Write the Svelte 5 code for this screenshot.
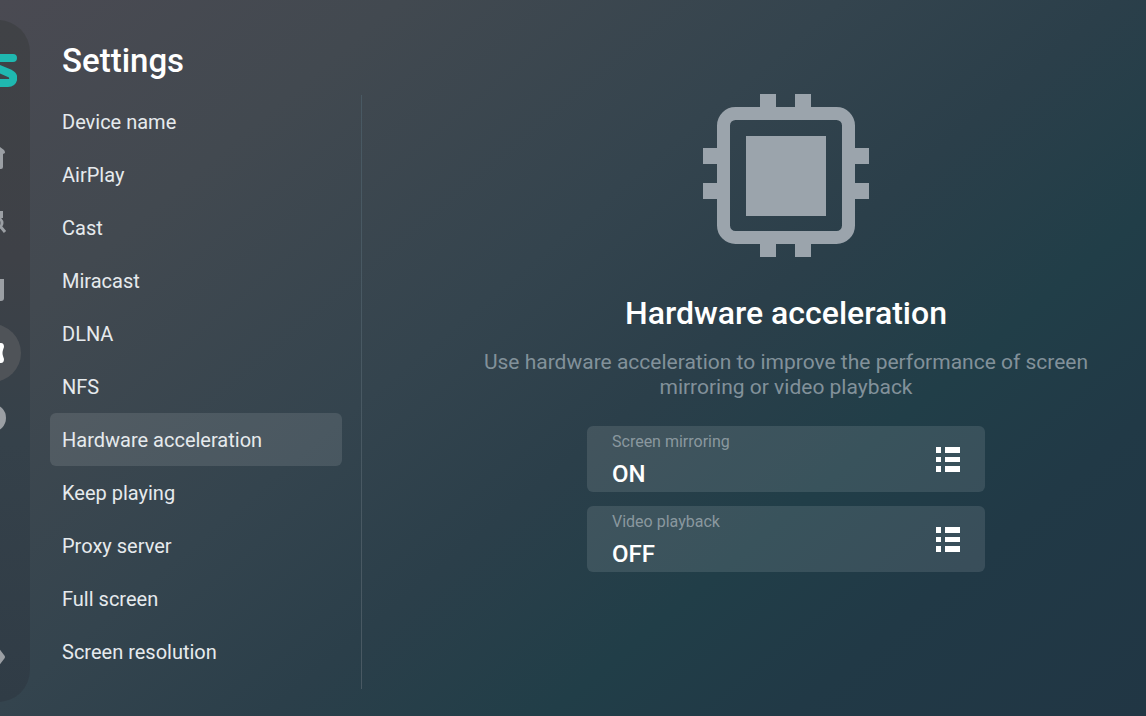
<script lang="ts">
	const items: string[] = [
		'Device name',
		'AirPlay',
		'Cast',
		'Miracast',
		'DLNA',
		'NFS',
		'Hardware acceleration',
		'Keep playing',
		'Proxy server',
		'Full screen',
		'Screen resolution'
	];

	let selected = $state('Hardware acceleration');

	let options = $state([
		{ label: 'Screen mirroring', on: true },
		{ label: 'Video playback', on: false }
	]);
</script>

<div class="app">
	<nav class="rail" aria-label="Main">
		<svg class="logo" viewBox="0 0 50 34" width="50" height="34">
			<path d="M46 4H12C5 4 5 10 12 11L30 14 43 19.500C48 22 47 29 41 29H4" />
		</svg>
		<button aria-label="Home">
			<svg viewBox="0 0 28 28" width="28" height="28">
				<path d="M14-3 26 6q1 1 1 3l-2 1v13a2 2 0 0 1-2 2h-6v-9h-6v9H5a2 2 0 0 1-2-2V10L1 9q0-2 1-3z" />
			</svg>
		</button>
		<button aria-label="Search">
			<svg viewBox="0 0 28 28" width="28" height="28">
				<path d="M2 2h23v7h-3L20 7H5v14h9v3H2z" />
				<path class="line" d="m22 17 5 6M24 14a5 5 0 1 1-10 0 5 5 0 0 1 10 0z" />
			</svg>
		</button>
		<button aria-label="Library">
			<svg viewBox="0 0 28 28" width="28" height="28">
				<path d="M2 5h24v19a3 3 0 0 1-3 3H5a3 3 0 0 1-3-3z" />
			</svg>
		</button>
		<button class="active" aria-label="Settings">
			<svg viewBox="0 0 28 28" width="28" height="28">
				<path d="M10 1h8l1 3h4q3 0 3 4l-1 3q-1 3 0 6l1 3q0 4-3 4h-4l-1 3h-8l-1-3H5q-3 0-3-4l1-3q1-3 0-6L2 8q0-4 3-4h4z" />
			</svg>
		</button>
		<button aria-label="Help">
			<svg viewBox="0 0 28 28" width="28" height="28">
				<circle cx="14" cy="14" r="14" />
			</svg>
		</button>
		<button class="exit" aria-label="Exit">
			<svg viewBox="0 0 28 28" width="28" height="28">
				<path d="M2 11h14V4q0-3 3-1l7 9q2 2 0 4l-7 9q-3 2-3-1v-7H2z" />
			</svg>
		</button>
	</nav>

	<section class="menu">
		<h1>Settings</h1>
		<ul>
			{#each items as item}
				<li>
					<button class:selected={item === selected} onclick={() => (selected = item)}>{item}</button>
				</li>
			{/each}
		</ul>
	</section>

	<main>
		<svg class="chip" viewBox="0 0 166 163" width="166" height="163">
			<path d="M57 0h16v14H57zM92 0h16v14H92zM57 149h16v14H57zM92 149h16v14H92zM0 54h16v16H0zM0 89h16v16H0zM150 54h16v16h-16zM150 89h16v16h-16zM43 42h80v80H43z" />
			<rect x="20.500" y="19.500" width="125" height="124" rx="12" />
		</svg>
		<h2>Hardware acceleration</h2>
		<p>Use hardware acceleration to improve the performance of screen mirroring or video playback</p>
		<div class="options">
			{#each options as option}
				<button onclick={() => (option.on = !option.on)}>
					<span class="text">
						<span class="label">{option.label}</span>
						<span class="value">{option.on ? 'ON' : 'OFF'}</span>
					</span>
					<svg viewBox="0 0 24 25" width="24" height="25">
						<path d="M0 0h5v6H0zM9 0h15v6H9zM0 10h5v5H0zM9 10h15v5H9zM0 19h5v6H0zM9 19h15v6H9z" />
					</svg>
				</button>
			{/each}
		</div>
	</main>
</div>

<style>
	:global(body) {
		margin: 0;
		background: #213644;
	}

	.app {
		display: flex;
		box-sizing: border-box;
		min-height: 100vh;
		overflow: hidden;
		font-family: Roboto, 'Liberation Sans', sans-serif;
		color: #fff;
		background: linear-gradient(140deg, #4a4a52 0%, #424950 20%, #34444e 42%, #2b3f4a 56%, #213e48 70%, #213946 82%, #213644 100%);
	}

	button {
		border: 0;
		background: none;
		font: inherit;
		color: inherit;
		cursor: pointer;
	}

	/* the rail slides partly off the left side of the screen */
	.rail {
		display: flex;
		flex-direction: column;
		align-items: center;
		flex: none;
		gap: 7px;
		box-sizing: border-box;
		width: 76px;
		margin: 20px 0 14px -46px;
		padding: 34px 0 16px;
		border-radius: 32px;
		background: linear-gradient(#404246, #3e4147 35%, #35414a 62%, #303c46);
	}

	.logo {
		margin-bottom: 34px;
		fill: none;
		stroke: #1fb8b0;
		stroke-width: 8;
		stroke-linecap: round;
		stroke-linejoin: round;
	}

	.rail button {
		display: flex;
		align-items: center;
		justify-content: center;
		width: 58px;
		height: 58px;
		padding: 0;
		border-radius: 50%;
		fill: #9b9fa4;
	}

	.rail button svg {
		overflow: visible;
	}

	.rail .active {
		background: #4f5358;
		fill: #fff;
	}

	.rail .exit {
		margin-top: auto;
	}

	.line {
		fill: none;
		stroke: #9b9fa4;
		stroke-width: 3;
	}

	.menu {
		display: flex;
		flex-direction: column;
		flex: none;
		width: 332px;
		padding-bottom: 27px;
	}

	h1 {
		margin: 0;
		padding: 41px 0 14px 32px;
		font-size: 33px;
		line-height: 40px;
		font-weight: 500;
	}

	ul {
		flex: 1;
		margin: 0;
		padding: 0 19px 10px 20px;
		list-style: none;
		border-right: 1px solid #495963;
	}

	li button {
		display: block;
		width: 100%;
		height: 53px;
		padding: 0 12px;
		border-radius: 6px;
		font-size: 20px;
		text-align: left;
		color: #e6eaed;
	}

	li .selected {
		background: rgba(255, 255, 255, 0.11);
	}

	main {
		display: flex;
		flex-direction: column;
		align-items: center;
		flex: 1;
		padding: 94px 32px 40px 96px;
	}

	.chip {
		fill: #9ba4ac;
	}

	.chip rect {
		fill: none;
		stroke: #9ba4ac;
		stroke-width: 13;
	}

	h2 {
		margin: 36px 0 17px;
		font-size: 32px;
		line-height: 40px;
		font-weight: 500;
	}

	p {
		max-width: 640px;
		margin: 0 0 26px;
		font-size: 21px;
		line-height: 25px;
		text-align: center;
		color: #82919a;
	}

	.options {
		display: flex;
		flex-direction: column;
		gap: 14px;
		width: 100%;
		max-width: 398px;
	}

	.options button {
		display: flex;
		align-items: center;
		justify-content: space-between;
		height: 66px;
		padding: 0 25px;
		border-radius: 6px;
		text-align: left;
		background: rgba(255, 255, 255, 0.11);
		fill: #fff;
	}

	.text {
		padding-top: 2px;
	}

	.label,
	.value {
		display: block;
	}

	.label {
		font-size: 16px;
		line-height: 28px;
		color: #8a989f;
	}

	.value {
		font-size: 24px;
		line-height: 36px;
		font-weight: 500;
	}
</style>
